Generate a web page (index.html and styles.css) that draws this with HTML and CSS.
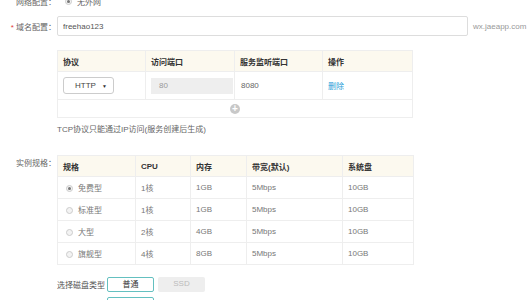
FILE: index.html
```html
<!DOCTYPE html>
<html lang="zh-CN">
<head>
<meta charset="UTF-8">
<title>创建服务</title>
<link rel="stylesheet" href="styles.css">
</head>
<body>
<div class="form">
    <div class="row row-net">
        <span class="label">网络配置：</span>
        <span class="radio checked"></span>
        <span class="radio-text">无外网</span>
    </div>

    <div class="row row-domain">
        <span class="label"><em>*</em> 域名配置：</span>
        <input class="domain-input" type="text" value="freehao123">
        <span class="suffix">wx.jaeapp.com</span>
    </div>

    <table class="grid ports">
        <tr>
            <th class="c1">协议</th>
            <th class="c2">访问端口</th>
            <th class="c3">服务监听端口</th>
            <th class="c4">操作</th>
        </tr>
        <tr class="port-row">
            <td><span class="select">HTTP<i>▼</i></span></td>
            <td><span class="box box-off">80</span></td>
            <td><span class="box">8080</span></td>
            <td><a class="del" href="#">删除</a></td>
        </tr>
        <tr class="add-row">
            <td colspan="4"><span class="plus">+</span></td>
        </tr>
    </table>

    <p class="hint">TCP协议只能通过IP访问(服务创建后生成)</p>

    <div class="row row-spec">
        <span class="label">实例规格：</span>
        <table class="grid specs">
            <tr>
                <th class="s1">规格</th>
                <th class="s2">CPU</th>
                <th class="s3">内存</th>
                <th class="s4">带宽(默认)</th>
                <th class="s5">系统盘</th>
            </tr>
            <tr>
                <td><span class="radio checked"></span>免费型</td>
                <td>1核</td><td>1GB</td><td>5Mbps</td><td>10GB</td>
            </tr>
            <tr>
                <td><span class="radio"></span>标准型</td>
                <td>1核</td><td>1GB</td><td>5Mbps</td><td>10GB</td>
            </tr>
            <tr>
                <td><span class="radio"></span>大型</td>
                <td>2核</td><td>4GB</td><td>5Mbps</td><td>10GB</td>
            </tr>
            <tr>
                <td><span class="radio"></span>旗舰型</td>
                <td>4核</td><td>8GB</td><td>5Mbps</td><td>10GB</td>
            </tr>
        </table>
    </div>

    <div class="row row-disk">
        <span class="disk-label">选择磁盘类型</span>
        <span class="btn active">普通</span>
        <span class="btn off">SSD</span>
    </div>
    <div class="row row-next">
        <span class="btn active"></span>
    </div>
</div>
</body>
</html>
```

FILE: styles.css
```css
body {
    margin: 0;
    padding: 0;
    background-color: #fff;
    font-family: "Liberation Sans", "Noto Sans CJK SC", sans-serif;
    font-size: 8px;
    color: #666;
}

.form {
    margin-top: -8px;
}

.row {
    display: flex;
    align-items: center;
}

.label {
    width: 56px;
    padding-right: 1px;
    text-align: right;
    color: #666;
    flex-shrink: 0;
    white-space: nowrap;
}

.label em {
    font-style: normal;
    color: #e4393c;
}

.row-net {
    height: 18px;
}

.radio {
    display: inline-block;
    width: 7px;
    height: 7px;
    border: 1px solid #ccc;
    border-radius: 50%;
    background-color: #f3f3f3;
    box-sizing: border-box;
    position: relative;
    margin-right: 5px;
    vertical-align: -1px;
}

.radio.checked::after {
    content: "";
    position: absolute;
    left: 1px;
    top: 1px;
    width: 3px;
    height: 3px;
    border-radius: 50%;
    background-color: #777;
}

.row-net .radio {
    margin-left: 8px;
}

.row-domain {
    margin-top: 6px;
    height: 20px;
}

.domain-input {
    width: 411px;
    height: 20px;
    box-sizing: border-box;
    border: 1px solid #ddd;
    border-radius: 2px;
    padding: 0 5px;
    font-family: inherit;
    font-size: 8px;
    color: #555;
    margin: 0;
}

.suffix {
    margin-left: 5px;
    color: #999;
}

.grid {
    border-collapse: collapse;
    table-layout: fixed;
}

.grid th, .grid td {
    box-sizing: border-box;
    border: 1px solid #eee;
    padding: 0 5px;
    text-align: left;
    white-space: nowrap;
}

.grid th {
    background-color: #fcf9ef;
    color: #333;
    font-weight: bold;
    height: 21px;
}

.ports {
    margin: 14px 0 0 57px;
    width: 355px;
}

.ports .c1 { width: 88px; }
.ports .c2 { width: 89px; }
.ports .c3 { width: 88px; }
.ports .c4 { width: 90px; }

.port-row td {
    height: 28px;
}

.select {
    display: flex;
    justify-content: space-between;
    align-items: center;
    width: 51px;
    height: 17px;
    box-sizing: border-box;
    border: 1px solid #ccc;
    border-radius: 3px;
    padding: 0 6px 0 11px;
    color: #444;
}

.select i {
    font-style: normal;
    font-size: 5px;
    color: #333;
}

.box {
    display: block;
    height: 16px;
    line-height: 16px;
    box-sizing: border-box;
    padding: 0 1px;
    width: 79px;
    color: #666;
}

.box-off {
    background-color: #eee;
    color: #999;
    width: 82px;
    padding-left: 8px;
}

.del {
    color: #2aa0d8;
    text-decoration: none;
}

.add-row td {
    height: 18px;
    text-align: center;
}

.plus {
    display: inline-block;
    width: 10px;
    height: 10px;
    line-height: 10px;
    border-radius: 50%;
    background-color: #c8c8c8;
    color: #fff;
    font-size: 10px;
    font-weight: bold;
    text-align: center;
    vertical-align: middle;
}

.hint {
    margin: 6px 0 0 57px;
    line-height: 12px;
    color: #666;
}

.row-spec {
    margin-top: 19px;
    align-items: flex-start;
}

.row-spec .label {
    line-height: 18px;
}

.specs {
    width: 356px;
}

.specs .s1 { width: 78px; }
.specs .s2 { width: 55px; }
.specs .s3 { width: 56px; }
.specs .s4 { width: 96px; }
.specs .s5 { width: 71px; }

.specs td {
    height: 22px;
    color: #777;
}

.specs td .radio {
    margin-left: 3px;
    margin-right: 5px;
}

.row-disk {
    margin: 12px 0 0 57px;
    height: 15px;
}

.disk-label {
    width: 50px;
    color: #555;
    white-space: nowrap;
}

.btn {
    display: inline-block;
    width: 47px;
    height: 15px;
    line-height: 13px;
    box-sizing: border-box;
    border-radius: 2px;
    text-align: center;
    margin-right: 4px;
}

.btn.active {
    border: 1px solid #64c0c0;
    color: #333;
    background-color: #fff;
}

.btn.off {
    background-color: #eee;
    color: #bbb;
}

.row-next {
    margin: 5px 0 0 107px;
}
```
